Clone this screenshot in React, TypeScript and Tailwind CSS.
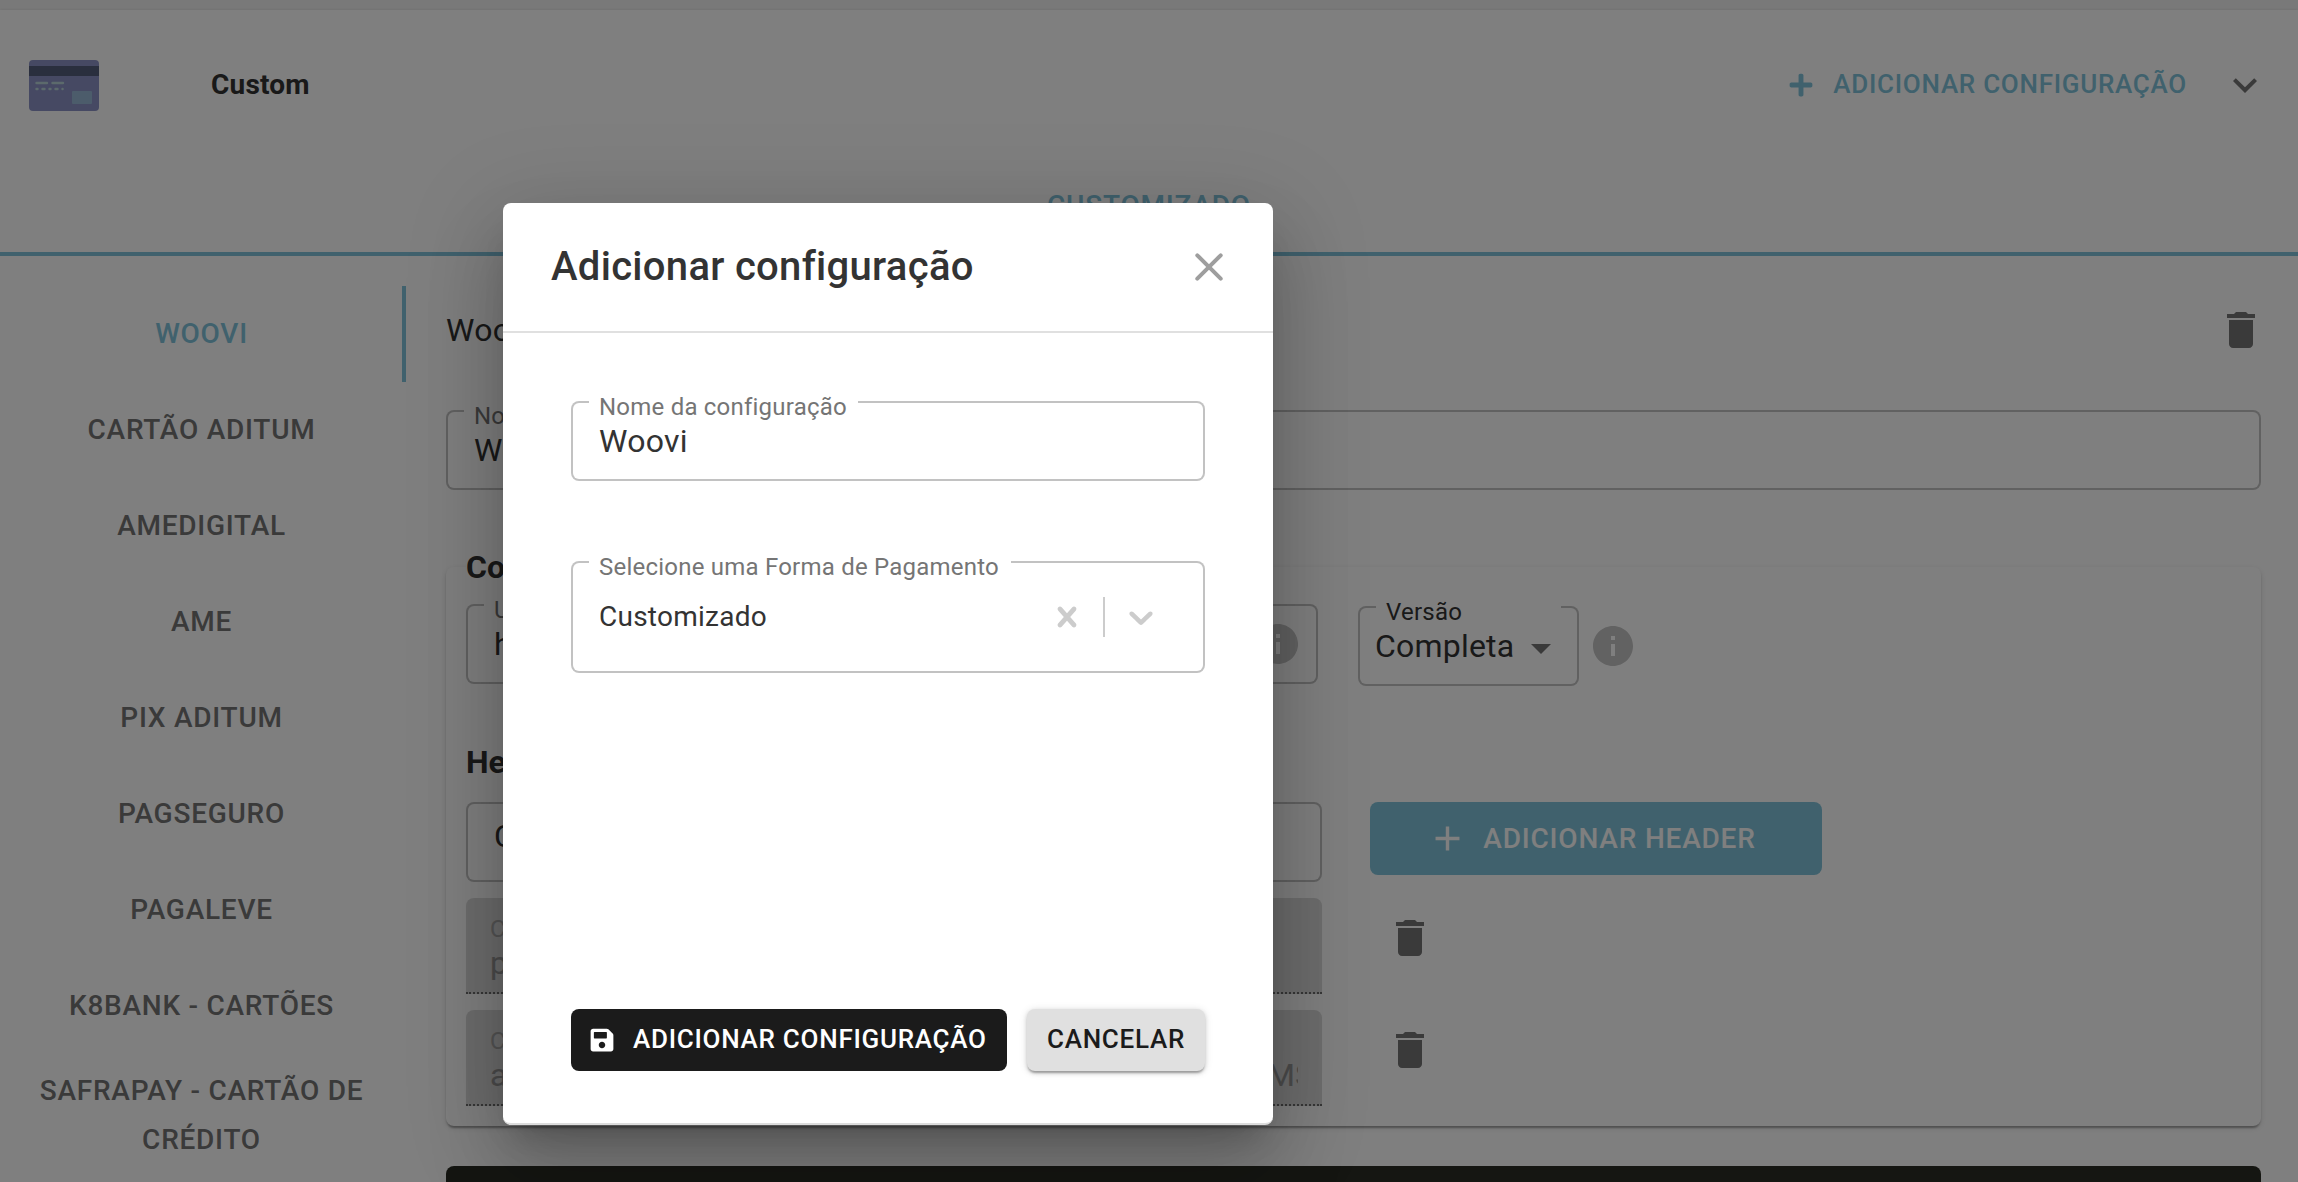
import type { ReactNode } from "react";
import { FaPlus, FaSave } from "react-icons/fa";
import { MdAdd, MdArrowDropDown, MdDelete, MdExpandMore, MdInfo } from "react-icons/md";

const PROVIDERS = [
  "WOOVI",
  "CARTÃO ADITUM",
  "AMEDIGITAL",
  "AME",
  "PIX ADITUM",
  "PAGSEGURO",
  "PAGALEVE",
  "K8BANK - CARTÕES",
  "SAFRAPAY - CARTÃO DE CRÉDITO",
];

type OutlinedProps = {
  className: string;
  label?: string;
  labelClass?: string;
  notchClass?: string;
  children?: ReactNode;
};

function Outlined({ className, label, labelClass = "text-[#757575]", notchClass, children }: OutlinedProps) {
  return (
    <div className={`relative flex flex-col ${className}`}>
      <div className="pointer-events-none absolute inset-0 flex">
        <div className="w-[18px] rounded-l-lg border-2 border-r-0 border-black/[0.24]" />
        {notchClass && <div className={`border-b-2 border-black/[0.24] ${notchClass}`} />}
        <div className="flex-1 rounded-r-lg border-2 border-l-0 border-black/[0.24]" />
      </div>
      {label && (
        <span
          className={`-mt-2 ml-7 shrink-0 whitespace-nowrap text-2xl leading-7 tracking-[0.22px] ${labelClass}`}
        >
          {label}
        </span>
      )}
      {children}
    </div>
  );
}

function CardLogo() {
  return (
    <svg width="70" height="51" viewBox="0 0 70 51">
      <rect width="70" height="51" rx="4" fill="#8c93c6" />
      <rect y="6" width="70" height="10" fill="#555f7c" />
      <rect x="43" y="31" width="20" height="13" rx="1" fill="#98b9d6" />
      <g stroke="#b8d4d8" strokeWidth="2.4" strokeLinecap="round">
        <path d="M7.5 23H18M23.500 23H34" />
        <path d="M7.500 29H8.500M13.500 29H15.500M20.500 29H21.500M26.500 29H28.500M33.500 29H33.600" />
      </g>
    </svg>
  );
}

function DisabledRow({ value, tail }: { value: string; tail?: string }) {
  return (
    <div className="flex gap-16">
      <div className="flex h-24 w-[856px] flex-col rounded-t-lg border-b-2 border-dotted border-[#6e6e6e] bg-[#dadada] px-6 pt-[17px]">
        <span className="text-2xl leading-7 text-[#a8a8a8]">Chave</span>
        <div className="flex h-10 justify-between overflow-hidden text-[32px] leading-10 text-[#999]">
          <span>{value}</span>
          {tail && <span className="w-[31px] whitespace-nowrap">{tail}</span>}
        </div>
      </div>
      <MdDelete size={48} className="mt-4 text-[#757575]" />
    </div>
  );
}

function Page() {
  return (
    <div className="flex h-[1182px] w-[2298px] flex-col overflow-hidden bg-[#f3f3f3] pt-2.5">
      <div className="flex flex-1 flex-col bg-white shadow-[0_0_3px_rgba(0,0,0,0.12)]">
        <header className="flex h-[150px] shrink-0 items-center pr-[29px] pl-[29px]">
          <CardLogo />
          <h1 className="ml-[112px] text-[28px] font-bold tracking-[0.2px]">Custom</h1>
          <button className="ml-auto flex items-center gap-[19px] text-[26px] font-medium tracking-[0.73px] text-[#80c3da]">
            <FaPlus size={26} />
            <span className="pb-0.5">ADICIONAR CONFIGURAÇÃO</span>
          </button>
          <MdExpandMore size={48} className="ml-[34px] text-[#757575]" />
        </header>

        <div className="flex h-24 shrink-0 items-center justify-center border-b-4 border-[#80c3da] text-[28px] font-medium tracking-[0.8px] text-[#80c3da]">
          CUSTOMIZADO
        </div>

        <div className="flex flex-1">
          <nav className="mt-[30px] flex w-[406px] shrink-0 flex-col text-[28px] leading-[49px] font-medium tracking-[0.75px] text-[#757575]">
            {PROVIDERS.map((name, i) => (
              <div
                key={name}
                className={`flex min-h-24 shrink-0 items-center justify-center border-r-4 pt-3 pr-[25px] pb-[14px] pl-[26px] text-center ${
                  i === 0 ? "border-[#80c3da] text-[#80c3da]" : "border-transparent"
                }`}
              >
                {name}
              </div>
            ))}
          </nav>

          <main className="ml-10 w-[1815px] shrink-0 pt-[50px]">
            <div className="flex h-12 items-center justify-between">
              <h2 className="text-[32px] tracking-[0.3px]">Woovi</h2>
              <MdDelete size={48} className="-mr-1 text-[#757575]" />
            </div>

            <Outlined className="mt-14 h-20" label="Nome da configuração" notchClass="w-[269px]">
              <span className="mt-0.5 ml-7 text-[32px] leading-9">Woovi</span>
            </Outlined>

            <section className="mt-[77px] flex h-[559px] flex-col rounded-lg px-5 shadow-[0_4px_2px_-2px_rgba(0,0,0,0.2),0_2px_2px_rgba(0,0,0,0.14),0_2px_6px_rgba(0,0,0,0.12)]">
              <h3 className="-mt-[18px] h-[37px] self-start bg-white text-[32px] leading-[36px] font-bold">
                Configurações
              </h3>
              <div className="mt-[18px] flex">
                <Outlined className="h-20 w-[852px]" label="URL" notchClass="w-[80px]">
                  <div className="mt-0.5 flex h-9 items-center justify-between pr-4 pl-7">
                    <span className="text-[32px] leading-9">https://</span>
                    <MdInfo size={48} className="text-[#c4c4c4]" />
                  </div>
                </Outlined>
                <Outlined
                  className="mt-0.5 ml-10 h-20 w-[221px]"
                  label="Versão"
                  labelClass="text-[#333]"
                  notchClass="w-[185px]"
                >
                  <div className="mt-0.5 flex h-9 items-center pl-[17px]">
                    <span className="text-[32px] leading-9 tracking-[0.2px]">Completa</span>
                    <MdArrowDropDown size={48} className="mt-1 ml-[3px] text-[#757575]" />
                  </div>
                </Outlined>
                <MdInfo size={48} className="mt-[18px] ml-2.5 text-[#c4c4c4]" />
              </div>

              <h3 className="mt-[58px] text-[32px] leading-9 font-bold">Headers</h3>
              <div className="mt-[22px] flex gap-12">
                <Outlined className="h-20 w-[856px] justify-center">
                  <span className="-mt-3 ml-7 text-[32px] leading-9">Content-Type</span>
                </Outlined>
                <button className="flex h-[73px] w-[452px] items-center justify-center gap-[15px] rounded-lg bg-[#80c3da] pr-[9px] text-[28px] font-medium tracking-[0.8px] text-white">
                  <MdAdd size={41} />
                  ADICIONAR HEADER
                </button>
              </div>
              <div className="mt-4 flex flex-col gap-4">
                <DisabledRow value="platform" />
                <DisabledRow value="authorization" tail="MS" />
              </div>
            </section>

            <div className="mt-10 h-16 rounded-lg bg-[#2b2d24]" />
          </main>
        </div>
      </div>
    </div>
  );
}

function Dialog() {
  return (
    <div className="absolute inset-0 bg-black/50 pt-[203px] pl-[503px]">
      <div className="flex h-[922px] w-[770px] flex-col rounded-lg border-b-2 border-[#dcdcdc] bg-white shadow-[0_22px_30px_-14px_rgba(0,0,0,0.2),0_48px_76px_6px_rgba(0,0,0,0.14),0_18px_92px_16px_rgba(0,0,0,0.12)]">
        <div className="flex h-[130px] shrink-0 items-center justify-between border-b-2 border-[#e0e0e0] pr-[50px] pl-12">
          <h2 className="text-[40px] font-medium tracking-[0.3px]">Adicionar configuração</h2>
          <svg width="28" height="28" viewBox="0 0 28 28" stroke="#9e9e9e" strokeWidth="4" strokeLinecap="round">
            <path d="M2.300 2.300L25.700 25.700M25.700 2.300L2.300 25.700" />
          </svg>
        </div>

        <div className="flex flex-1 flex-col px-[68px] pt-[68px]">
          <Outlined className="h-20" label="Nome da configuração" notchClass="w-[269px]">
            <span className="mt-0.5 ml-7 text-[32px] leading-9 tracking-[0.3px]">Woovi</span>
          </Outlined>

          <Outlined className="mt-20 h-28" label="Selecione uma Forma de Pagamento" notchClass="w-[422px]">
            <div className="mt-4 flex h-10 items-center pr-11 pl-7 text-[#ccc]">
              <span className="text-[28px] leading-10 tracking-[0.25px] text-[#333]">Customizado</span>
              <svg width="40" height="40" viewBox="0 0 20 20" fill="currentColor" className="ml-auto">
                <path d="M14.348 14.849c-0.469 0.469-1.229 0.469-1.697 0l-2.651-3.030-2.651 3.029c-0.469 0.469-1.229 0.469-1.697 0-0.469-0.469-0.469-1.229 0-1.697l2.758-3.15-2.759-3.152c-0.469-0.469-0.469-1.228 0-1.697s1.228-0.469 1.697 0l2.652 3.031 2.651-3.031c0.469-0.469 1.228-0.469 1.697 0s0.469 1.229 0 1.697l-2.758 3.152 2.758 3.15c0.469 0.469 0.469 1.229 0 1.698z" />
              </svg>
              <div className="mx-4 h-10 w-0.5 bg-[#ccc]" />
              <svg width="40" height="40" viewBox="0 0 20 20" fill="currentColor">
                <path d="M4.516 7.548c0.436-0.446 1.043-0.481 1.576 0l3.908 3.747 3.908-3.747c0.533-0.481 1.141-0.446 1.574 0 0.436 0.445 0.408 1.197 0 1.615-0.406 0.418-4.695 4.502-4.695 4.502-0.217 0.223-0.502 0.335-0.787 0.335s-0.57-0.112-0.789-0.335c0 0-4.287-4.084-4.695-4.502s-0.436-1.17 0-1.615z" />
              </svg>
            </div>
          </Outlined>

          <div className="mt-auto mb-[52px] flex gap-5 text-[26px] font-medium tracking-[0.73px]">
            <button className="flex h-[62px] w-[436px] items-center gap-[18px] rounded-lg bg-[#1b1b1b] pl-[18px] whitespace-nowrap text-white">
              <FaSave size={26} />
              <span className="pb-0.5">ADICIONAR CONFIGURAÇÃO</span>
            </button>
            <button className="h-[62px] w-[178px] rounded-lg bg-[#e0e0e0] pb-0.5 text-[#1b1b1b] shadow-[0_3px_2px_-1px_rgba(0,0,0,0.25),0_2px_4px_rgba(0,0,0,0.16),0_1px_8px_rgba(0,0,0,0.12)]">
              CANCELAR
            </button>
          </div>
        </div>
      </div>
    </div>
  );
}

export default function App() {
  return (
    <div className="relative h-[1182px] w-[2298px] overflow-hidden font-[Roboto,sans-serif] text-[#333]">
      <Page />
      <Dialog />
    </div>
  );
}
